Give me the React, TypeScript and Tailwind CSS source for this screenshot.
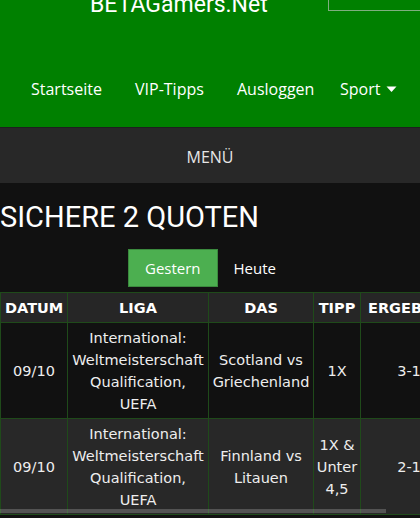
import React from "react";

const rows = [
  {
    datum: "09/10",
    liga: ["International:", "Weltmeisterschaft", "Qualification,", "UEFA"],
    das: ["Scotland vs", "Griechenland"],
    tipp: ["1X"],
    erg: "3-1",
    bg: "bg-[#111111]",
  },
  {
    datum: "09/10",
    liga: ["International:", "Weltmeisterschaft", "Qualification,", "UEFA"],
    das: ["Finnland vs", "Litauen"],
    tipp: ["1X &", "Unter", "4,5"],
    erg: "2-1",
    bg: "bg-[#282828]",
  },
];

export default function App() {
  return (
    <div className="w-[420px] h-[518px] overflow-hidden bg-[#111111] font-['Open_Sans','Noto_Sans',sans-serif]">
      {/* Header */}
      <div className="h-[128px] bg-[#008000] flex flex-col border-b border-[#1f1f1f]">
        <div className="flex items-start h-[12px] overflow-visible">
          <div className="pl-[90px] -mt-[11px] font-['Roboto',sans-serif] text-[23px] leading-[32px] text-white whitespace-nowrap">
            BETAGamers.Net
          </div>
          <div className="ml-auto w-[92px] h-[11px] border-l border-b border-[#7fae7f]" />
        </div>
        <div className="flex items-center pl-[31px] mt-[66px] text-[16px] text-white leading-[22px]">
          <div className="w-[104px]">Startseite</div>
          <div className="w-[102px]">VIP-Tipps</div>
          <div className="w-[103px]">Ausloggen</div>
          <div className="flex items-center gap-[6px]">
            <span>Sport</span>
            <svg width="11" height="7" viewBox="0 0 11 7">
              <path d="M0.5 0.5 L10.5 0.5 L5.5 6 Z" fill="white" />
            </svg>
          </div>
        </div>
      </div>

      {/* Menu bar */}
      <div className="h-[55px] bg-[#282828] flex items-center justify-center pt-[3px] text-[16px] text-[#e6e6e6]">
        MENÜ
      </div>

      {/* Title */}
      <div className="mt-[16px] font-['Roboto',sans-serif] text-[29px] leading-[36px] text-white whitespace-nowrap">
        SICHERE 2 QUOTEN
      </div>

      {/* Tabs */}
      <div className="mt-[14px] flex justify-center text-[15px] text-white">
        <div className="h-[38px] px-[16px] flex items-center bg-[#4caf50] border border-[#3b8a3e]">
          Gestern
        </div>
        <div className="h-[38px] px-[16px] flex items-center">Heute</div>
      </div>

      {/* Table */}
      <div className="relative mt-[5px] w-[420px] overflow-hidden">
        <table className="table-fixed border-collapse w-[457px] font-['DejaVu_Sans',sans-serif] text-[14.5px] leading-[22px] text-[#eeeeee]">
          <colgroup>
            <col className="w-[67px]" />
            <col className="w-[141px]" />
            <col className="w-[105px]" />
            <col className="w-[47px]" />
            <col className="w-[97px]" />
          </colgroup>
          <thead>
            <tr className="bg-[#262626] text-white font-bold">
              {["DATUM", "LIGA", "DAS", "TIPP", "ERGEBNIS"].map((h) => (
                <th
                  key={h}
                  className="border border-[#1f4a1a] px-[4px] pt-[4px] pb-[3px] text-center whitespace-nowrap overflow-hidden"
                >
                  {h}
                </th>
              ))}
            </tr>
          </thead>
          <tbody>
            {rows.map((r, i) => (
              <tr key={i} className={r.bg}>
                <td className="border border-[#1f4a1a] px-[4px] pt-[4px] pb-[3px] text-center">{r.datum}</td>
                <td className="border border-[#1f4a1a] px-[2px] pt-[4px] pb-[3px] text-center">
                  {r.liga.map((l, j) => (
                    <div key={j} className="whitespace-nowrap">{l}</div>
                  ))}
                </td>
                <td className="border border-[#1f4a1a] px-[2px] pt-[4px] pb-[3px] text-center">
                  {r.das.map((l, j) => (
                    <div key={j} className="whitespace-nowrap">{l}</div>
                  ))}
                </td>
                <td className="border border-[#1f4a1a] px-[2px] pt-[4px] pb-[3px] text-center">
                  {r.tipp.map((l, j) => (
                    <div key={j} className="whitespace-nowrap">{l}</div>
                  ))}
                </td>
                <td className="border border-[#1f4a1a] px-[4px] pt-[4px] pb-[3px] text-center">{r.erg}</td>
              </tr>
            ))}
          </tbody>
        </table>
        <div className="absolute left-0 bottom-[2px] w-[386px] h-[4px] bg-white/20" />
      </div>
    </div>
  );
}
